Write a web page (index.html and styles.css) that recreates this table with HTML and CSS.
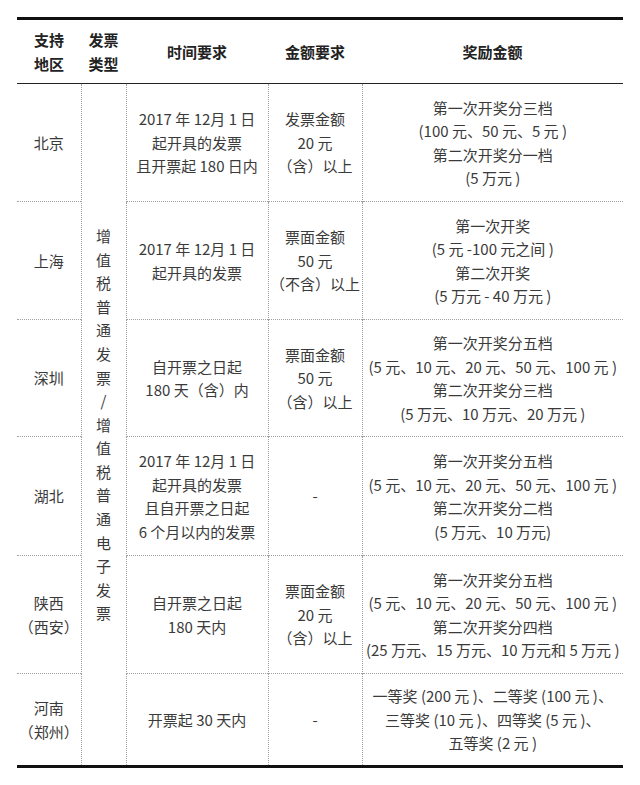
FILE: index.html
```html
<!DOCTYPE html>
<html lang="zh">
<head>
<meta charset="utf-8">
<link rel="stylesheet" href="styles.css">
</head>
<body>
<div class="page">
<table class="prize">
  <colgroup>
    <col class="c1"><col class="c2"><col class="c3"><col class="c4"><col class="c5">
  </colgroup>
  <thead>
    <tr class="head">
      <th>支持<br>地区</th>
      <th>发票<br>类型</th>
      <th>时间要求</th>
      <th>金额要求</th>
      <th>奖励金额</th>
    </tr>
  </thead>
  <tbody>
    <tr class="r-bj">
      <td>北京</td>
      <td class="vert" rowspan="6">增<br>值<br>税<br>普<br>通<br>发<br>票<br>/<br>增<br>值<br>税<br>普<br>通<br>电<br>子<br>发<br>票</td>
      <td>2017 年 12月 1 日<br>起开具的发票<br>且开票起 180 日内</td>
      <td>发票金额<br>20 元<br>（含）以上</td>
      <td>第一次开奖分三档<br>(100 元、50 元、5 元 )<br>第二次开奖分一档<br>(5 万元 )</td>
    </tr>
    <tr class="r-sh">
      <td>上海</td>
      <td>2017 年 12月 1 日<br>起开具的发票</td>
      <td>票面金额<br>50 元<br>（不含）以上</td>
      <td>第一次开奖<br>(5 元 -100 元之间 )<br>第二次开奖<br>(5 万元 - 40 万元 )</td>
    </tr>
    <tr class="r-sz">
      <td>深圳</td>
      <td>自开票之日起<br>180 天（含）内</td>
      <td>票面金额<br>50 元<br>（含）以上</td>
      <td>第一次开奖分五档<br>(5 元、10 元、20 元、50 元、100 元 )<br>第二次开奖分三档<br>(5 万元、10 万元、20 万元 )</td>
    </tr>
    <tr class="r-hb">
      <td>湖北</td>
      <td>2017 年 12月 1 日<br>起开具的发票<br>且自开票之日起<br>6 个月以内的发票</td>
      <td>-</td>
      <td>第一次开奖分五档<br>(5 元、10 元、20 元、50 元、100 元 )<br>第二次开奖分二档<br>(5 万元、10 万元)</td>
    </tr>
    <tr class="r-sx">
      <td>陕西<br>（西安）</td>
      <td>自开票之日起<br>180 天内</td>
      <td>票面金额<br>20 元<br>（含）以上</td>
      <td>第一次开奖分五档<br>(5 元、10 元、20 元、50 元、100 元 )<br>第二次开奖分四档<br>(25 万元、15 万元、10 万元和 5 万元 )</td>
    </tr>
    <tr class="r-hn">
      <td>河南<br>（郑州）</td>
      <td>开票起 30 天内</td>
      <td>-</td>
      <td>一等奖 (200 元 )、二等奖 (100 元 )、<br>三等奖 (10 元 )、四等奖 (5 元 )、<br>五等奖 (2 元 )</td>
    </tr>
  </tbody>
</table>
</div>
</body>
</html>
```
FILE: styles.css
```css
html, body {
  margin: 0;
  padding: 0;
  background: #fff;
}
.page {
  padding: 17px 0 0 17px;
}
.prize {
  width: 606px;
  border-collapse: collapse;
  table-layout: fixed;
  font-family: "Noto Sans CJK SC", "Noto Sans", sans-serif;
  font-size: 15px;
  line-height: 23.5px;
  color: #3a3a3a;
  border-top: 3px solid #111;
  border-bottom: 3px solid #111;
}
.c1 { width: 64px; }
.c2 { width: 45px; }
.c3 { width: 142px; }
.c4 { width: 94px; }
.c5 { width: 261px; }
.prize th, .prize td {
  padding: 0;
  text-align: center;
  vertical-align: middle;
  font-weight: normal;
}
.prize th {
  font-weight: bold;
  color: #222;
  border-bottom: 1px solid #222;
}
.head { height: 65px; }
.prize td {
  border-left: 1px dotted #a0a0a0;
  border-top: 1px dotted #a0a0a0;
}
.prize tbody tr:first-child td { border-top: 1px solid #222; }
.prize td:first-child { border-left: none; }
.vert { line-height: 23.6px; }
.r-bj { height: 118px; }
.r-sh { height: 118px; }
.r-sz { height: 117px; }
.r-hb { height: 119px; }
.r-sx { height: 118px; }
.r-hn { height: 93px; }
```
